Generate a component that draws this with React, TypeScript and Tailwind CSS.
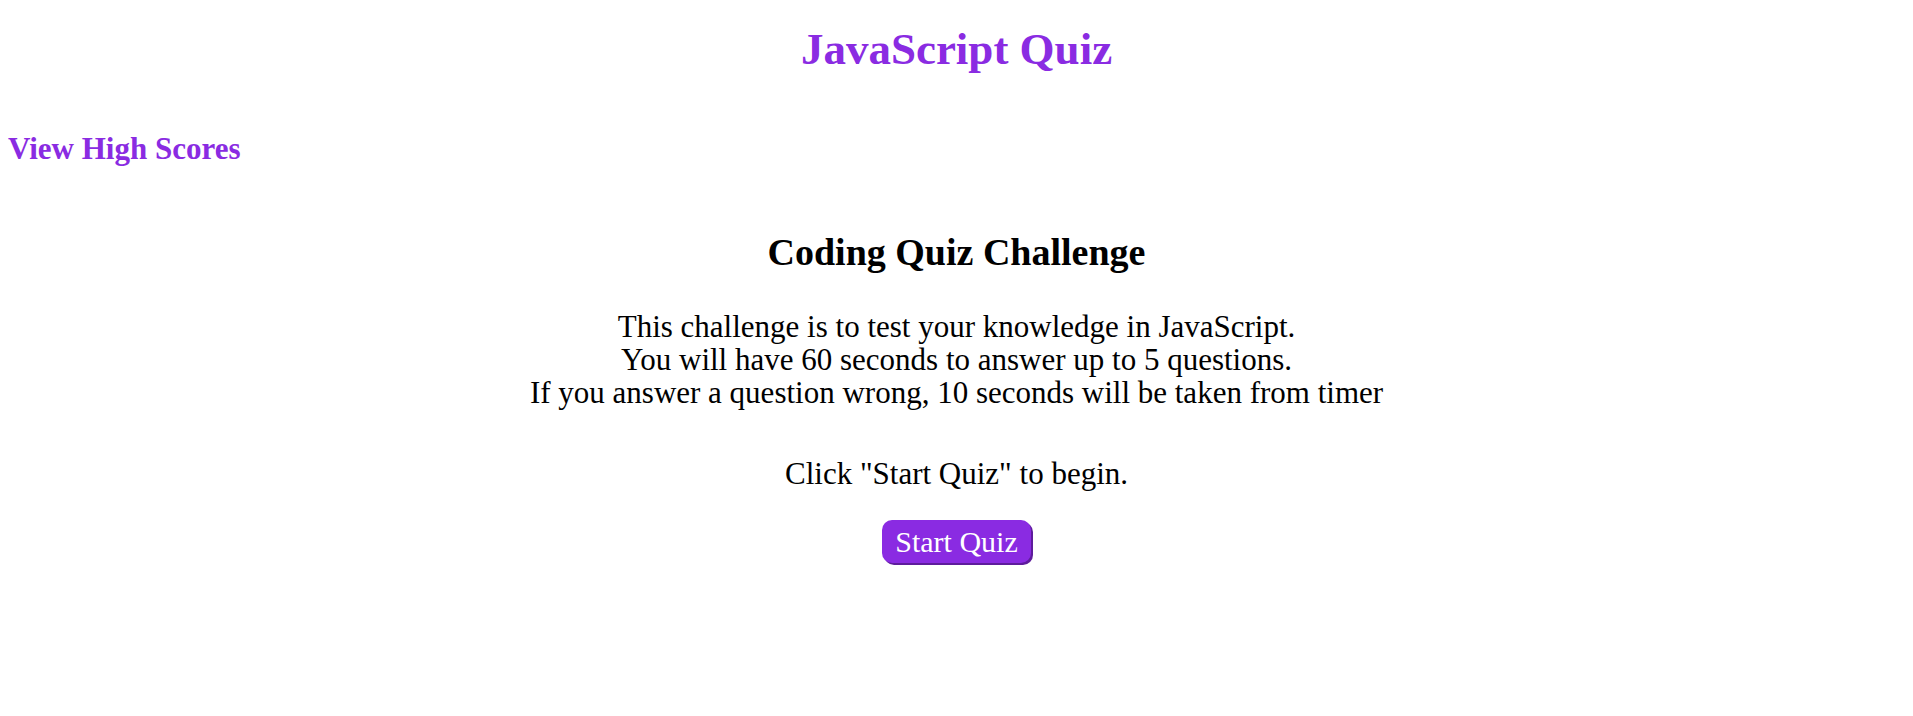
import React from "react";

export default function App() {
  return (
    <div className="min-h-[716px] bg-white text-black font-['Liberation_Serif',serif]">
      <header>
        <h1 className="pt-[27px] text-center text-[45px] leading-none font-bold text-[#8a2be2]">
          JavaScript Quiz
        </h1>
        <a
          href="#"
          className="mt-[61px] ml-[8px] block w-max text-[31px] leading-none font-bold text-[#8a2be2]"
        >
          View High Scores
        </a>
      </header>
      <main className="flex flex-col items-center text-center">
        <h2 className="mt-[69px] text-[38px] leading-none font-bold">
          Coding Quiz Challenge
        </h2>
        <p className="mt-[39px] text-[31px] leading-[33px]">
          This challenge is to test your knowledge in JavaScript.
          <br />
          You will have 60 seconds to answer up to 5 questions.
          <br />
          If you answer a question wrong, 10 seconds will be taken from timer
        </p>
        <p className="mt-[48px] text-[31px] leading-[33px]">
          Click "Start Quiz" to begin.
        </p>
        <button className="mt-[30px] h-[43px] rounded-[10px] bg-[#8a2be2] px-[13px] text-[30px] leading-none text-white shadow-[2px_2px_0_#5e1c9c]">
          Start Quiz
        </button>
      </main>
    </div>
  );
}
